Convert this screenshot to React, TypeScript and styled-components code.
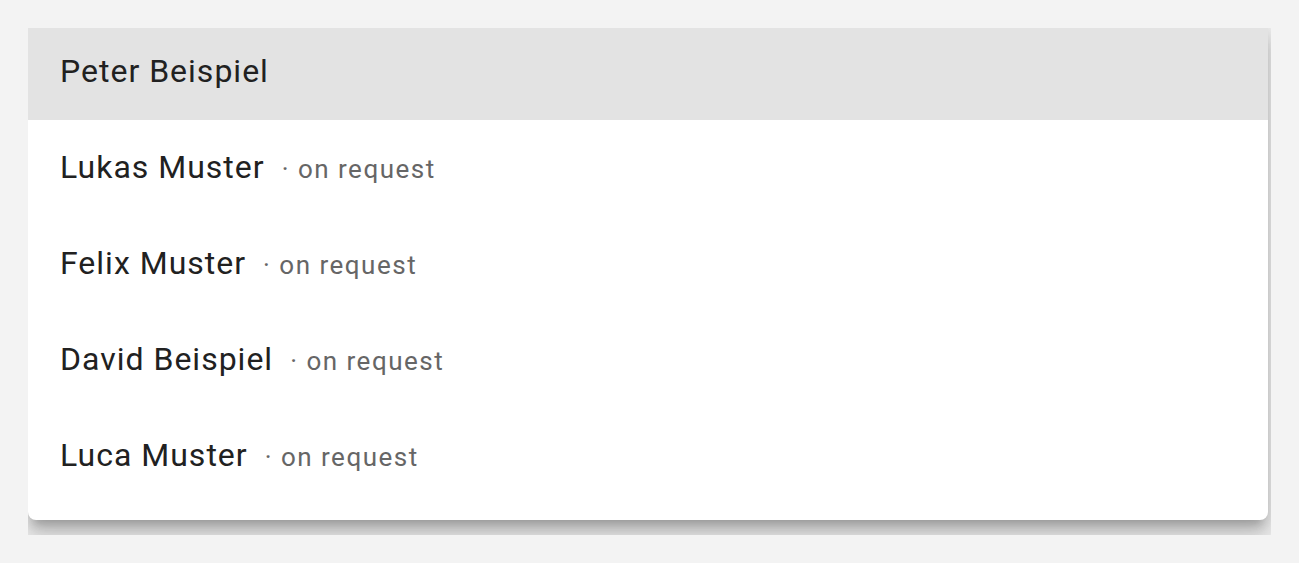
import styled, { createGlobalStyle } from "styled-components";

type Person = {
  name: string;
  note?: string;
  selected?: boolean;
};

const people: Person[] = [
  { name: "Peter Beispiel", selected: true },
  { name: "Lukas Muster", note: "on request" },
  { name: "Felix Muster", note: "on request" },
  { name: "David Beispiel", note: "on request" },
  { name: "Luca Muster", note: "on request" },
];

export default function App() {
  return (
    <>
      <GlobalStyle />
      <Page>
        <Viewport>
          <Card>
            {people.map((p) => (
              <Row key={p.name} $selected={p.selected}>
                <Name>{p.name}</Name>
                {p.note && <Note>· {p.note}</Note>}
              </Row>
            ))}
          </Card>
        </Viewport>
      </Page>
    </>
  );
}

const GlobalStyle = createGlobalStyle`
  html, body {
    margin: 0;
    background: #f3f3f3;
  }
  body {
    font-family: Roboto, "Liberation Sans", sans-serif;
  }
`;

const Page = styled.div`
  padding: 28px;
`;

const Viewport = styled.div`
  width: 1243px;
  height: 507px;
  overflow: hidden;
`;

const Card = styled.ul`
  list-style: none;
  margin: -4px 0 0;
  padding: 0 0 16px;
  width: 1240px;
  background: #ffffff;
  border-radius: 0 0 8px 8px;
  box-shadow: 0 10px 10px -6px rgba(0, 0, 0, 0.2),
    0 16px 20px 2px rgba(0, 0, 0, 0.14), 0 6px 28px 4px rgba(0, 0, 0, 0.12);
`;

const Row = styled.li<{ $selected?: boolean }>`
  display: flex;
  align-items: baseline;
  gap: 17px;
  height: 96px;
  box-sizing: border-box;
  padding: 28px 32px 0;
  background: ${(p) => (p.$selected ? "#e3e3e3" : "transparent")};
`;

const Name = styled.span`
  font-size: 32px;
  letter-spacing: 1px;
  color: #212121;
`;

const Note = styled.span`
  font-size: 26px;
  letter-spacing: 1.5px;
  color: #666666;
`;
